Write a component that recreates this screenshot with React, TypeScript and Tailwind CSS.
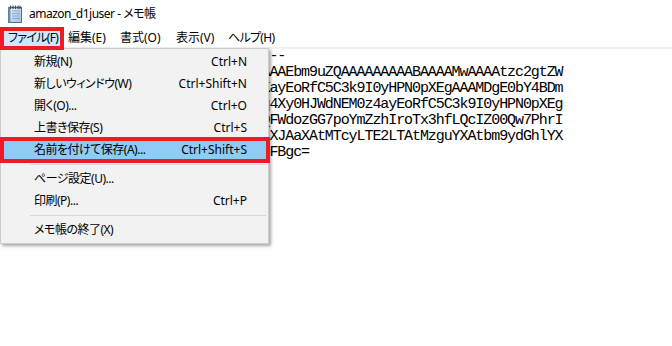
const uiFont = "font-['Noto_Sans','Noto_Sans_CJK_JP',sans-serif] [font-feature-settings:'palt']";

// each key line: 33 hidden chars (under the menu) + what shows to the right
const lines = [
  "-----BEGIN OPENSSH PRIVATE KEY-----",
  "b3BlbnNzaC1rZXktdjEAAAAABG5vbmUAA" + "AAEbm9uZQAAAAAAAAABAAAAMwAAAAtzc2gtZW",
  "QyNTUxOQAAACBqWk3mT8vRx0Lb2uNcGpK" + "ayEoRfC5C3k9I0yHPN0pXEgAAAMDgE0bY4BDm",
  "NHgVwS2tAeQpm7KJc1dZrYbX0oLuFi7Wq" + "4Xy0HJWdNEM0z4ayEoRfC5C3k9I0yHPN0pXEg",
  "AAAEBhQ2xvTt8UyzKmcR1pVaJw5eNgOdQ" + "FWdozGG7poYmZzhIroTx3hfLQcIZ00Qw7PhrI",
  "AAAADGVjMi11c2VyQGlwLTE3Mi0zMS0tL" + "XJAaXAtMTcyLTE2LTAtMzguYXAtbm9ydGhlYX",
  "N0LTEuY29tcHV0ZS5pbnRlcm5hbAECAwQ" + "FBgc=",
  "-----END OPENSSH PRIVATE KEY-----",
];

const menuItems = [
  { label: "ファイル(F)", w: "w-[60px]", t: "tracking-[-0.7px]" },
  { label: "編集(E)", w: "w-[52px]", t: "" },
  { label: "書式(O)", w: "w-[56px]", t: "" },
  { label: "表示(V)", w: "w-[52px]", t: "" },
  { label: "ヘルプ(H)", w: "w-[60px]", t: "tracking-[-0.7px]" },
];

type Entry = { label: string; key?: string; active?: boolean } | "sep";

const fileMenu: Entry[] = [
  { label: "新規(N)", key: "Ctrl+N" },
  { label: "新しいウィンドウ(W)", key: "Ctrl+Shift+N" },
  { label: "開く(O)...", key: "Ctrl+O" },
  { label: "上書き保存(S)", key: "Ctrl+S" },
  { label: "名前を付けて保存(A)...", key: "Ctrl+Shift+S", active: true },
  "sep",
  { label: "ページ設定(U)..." },
  { label: "印刷(P)...", key: "Ctrl+P" },
  "sep",
  { label: "メモ帳の終了(X)" },
];

const NotepadIcon = () => (
  <svg width="16" height="18" viewBox="0 0 16 18">
    <defs>
      <linearGradient id="pg" x1="0" y1="0" x2="1" y2="1">
        <stop offset="0" stopColor="#e9f4fc" />
        <stop offset="1" stopColor="#9cc3e3" />
      </linearGradient>
    </defs>
    <rect x="1.5" y="2.5" width="13" height="15" fill="url(#pg)" stroke="#52708e" />
    <rect x="1.5" y="2.5" width="2" height="15" fill="#6f93b6" />
    {[6, 8.5, 11, 13.5].map((y) => (
      <line key={y} x1="5" y1={y} x2="13" y2={y} stroke="#7d9bb8" strokeWidth="0.8" />
    ))}
    {[3.5, 6, 8.5, 11, 13].map((x) => (
      <rect key={x} x={x - 0.6} y="0.5" width="1.3" height="3.5" rx="0.6" fill="#3c4a57" />
    ))}
  </svg>
);

export default function App() {
  return (
    <div className={`relative w-[672px] h-[346px] overflow-hidden bg-white text-black ${uiFont}`}>
      <div className="h-[28px] flex items-center pl-[7px] gap-[6px]">
        <div className="-mt-[1px]">
          <NotepadIcon />
        </div>
        <span className="text-[12px] leading-none -mt-[1px] tracking-[-0.5px]">amazon_d1juser - メモ帳</span>
      </div>

      <div className="h-[19px] flex items-center pl-[1px] border-b-2 border-[#f0f0f0] box-content">
        {menuItems.map((m, i) => (
          <div
            key={m.label}
            className={`${m.w} ${m.t} h-[19px] pl-[7px] flex items-center whitespace-nowrap text-[12px] leading-none ${i === 0 ? "bg-[#cce8ff]" : ""}`}
          >
            {m.label}
          </div>
        ))}
      </div>

      <div className="pl-[8px] font-['Liberation_Mono',monospace] text-[15px] tracking-[-1.08px] leading-[16px] whitespace-pre [font-feature-settings:normal]">
        {lines.map((l, i) => (
          <div key={i}>{l}</div>
        ))}
      </div>

      {/* dropdown */}
      <div className="absolute left-0 top-[48px] w-[269px] bg-[#f2f2f2] border border-[#cccccc] p-[2px] shadow-[2px_2px_3px_rgba(0,0,0,0.35)]">
        {fileMenu.map((e, i) =>
          e === "sep" ? (
            <div key={i} className="h-[7px] flex items-center pl-[27px]">
              <div className="h-px w-full bg-[#d7d7d7]" />
            </div>
          ) : (
            <div
              key={i}
              className={`h-[22px] pl-[31px] pr-[19px] flex items-center justify-between whitespace-nowrap text-[12px] leading-none ${e.active ? "bg-[#91c9f7]" : ""}`}
            >
              <span className="tracking-[-0.5px]">{e.label}</span>
              {e.key && <span>{e.key}</span>}
            </div>
          )
        )}
      </div>

      {/* annotation boxes */}
      <div className="absolute left-0 top-[27px] w-[64px] h-[23px] border-4 border-[#ec1c24]" />
      <div className="absolute left-0 top-[137px] w-[270px] h-[26px] border-4 border-[#ec1c24]" />
    </div>
  );
}
